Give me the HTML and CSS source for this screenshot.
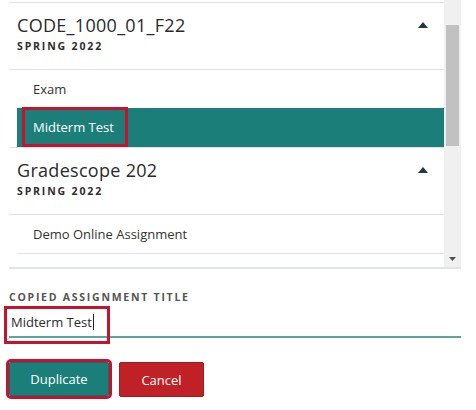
FILE: index.html
```html
<!DOCTYPE html>
<html>
<head>
<meta charset="utf-8">
<link rel="stylesheet" href="styles.css">
</head>
<body>
<div class="picker">
  <div class="list">
    <div class="course-head">
      <div class="course-text">
        <div class="course-title">CODE_1000_01_F22</div>
        <div class="course-term">SPRING 2022</div>
      </div>
      <svg class="caret" width="10" height="6" viewBox="0 0 10 6"><polygon points="5,0 10,6 0,6" fill="#1f3a3d"/></svg>
    </div>
    <div class="items">
      <div class="item">Exam</div>
      <div class="item selected"><span class="mark">Midterm Test</span></div>
    </div>
    <div class="course-head">
      <div class="course-text">
        <div class="course-title">Gradescope 202</div>
        <div class="course-term">SPRING 2022</div>
      </div>
      <svg class="caret" width="10" height="6" viewBox="0 0 10 6"><polygon points="5,0 10,6 0,6" fill="#1f3a3d"/></svg>
    </div>
    <div class="items">
      <div class="item">Demo Online Assignment</div>
    </div>
  </div>
  <div class="scrollbar">
    <div class="thumb"></div>
    <div class="down">
      <svg width="7" height="4" viewBox="0 0 7 4"><polygon points="0,0 7,0 3.5,4" fill="#505050"/></svg>
    </div>
  </div>
</div>

<div class="field">
  <div class="label">COPIED ASSIGNMENT TITLE</div>
  <div class="input-wrap">
    <div class="input">Midterm Test<span class="cursor"></span></div>
    <div class="input-mark"></div>
  </div>
</div>

<div class="actions">
  <button class="btn primary marked">Duplicate</button>
  <button class="btn danger">Cancel</button>
</div>
</body>
</html>
```

FILE: styles.css
```css
* { box-sizing: border-box; }
body {
  margin: 0;
  background: #fff;
  font-family: "Open Sans", Lato, sans-serif;
  color: #2b2b2b;
  width: 476px;
  height: 410px;
  overflow: hidden;
}
.picker {
  margin-left: 9px;
  width: 452px;
  height: 269px;
  display: flex;
  border-bottom: 2px solid #e1e4e9;
}
.list {
  width: 435px;
  padding-top: 2px;
  overflow: hidden;
}
.course-head {
  height: 68px;
  border-top: 1px solid #e2e0e8;
  border-bottom: 1px solid #e2e0e8;
  padding: 11px 16px 0 8px;
  display: flex;
  justify-content: space-between;
  align-items: flex-start;
}
.course-title {
  font-size: 18px;
  line-height: 22px;
  letter-spacing: 0.3px;
  color: #2a2a2a;
}
.course-term {
  margin-top: 4px;
  font-size: 10.5px;
  line-height: 13px;
  font-weight: 700;
  letter-spacing: 1.85px;
  color: #2e2e2e;
}
.caret { margin-top: 8px; }
.items { margin-left: 8px; }
.item {
  height: 39px;
  border-bottom: 1px solid #e4e4e8;
  padding-left: 16px;
  display: flex;
  align-items: center;
  font-size: 13px;
  color: #333;
}
.item.selected {
  margin-top: -1px;
  background: #1b7e78;
  border-bottom-color: #1b7e78;
  color: #fff;
  padding-left: 5px;
}
.mark {
  height: 40px;
  width: 106px;
  border: 3px solid #c4122f;
  padding-left: 8px;
  display: flex;
  align-items: center;
}
.scrollbar {
  width: 17px;
  background: #f0f0f0;
  display: flex;
  flex-direction: column;
  align-items: center;
}
.thumb {
  margin-top: 25px;
  width: 13px;
  height: 121px;
  background: #c1c1c1;
}
.down {
  margin-top: auto;
  height: 17px;
  width: 17px;
  display: flex;
  align-items: center;
  justify-content: center;
}
.down svg { display: block; }
.field { margin: 22px 0 0 9px; width: 452px; }
.label {
  font-size: 10.5px;
  line-height: 13px;
  font-weight: 700;
  letter-spacing: 1.75px;
  color: #555;
}
.input-wrap { position: relative; margin-top: 3px; }
.input {
  height: 31px;
  border-bottom: 2px solid #5ba4a0;
  padding-left: 2px;
  display: flex;
  align-items: center;
  font-size: 13px;
  color: #2b2b2b;
}
.cursor {
  display: inline-block;
  width: 1px;
  height: 16px;
  background: #222;
  margin-left: 1px;
}
.input-mark {
  position: absolute;
  left: -5px;
  top: -1px;
  width: 106px;
  height: 38px;
  border: 3px solid #c4122f;
}
.actions {
  margin: 24px 0 0 9px;
  display: flex;
  gap: 10px;
  align-items: flex-start;
}
.btn {
  font-family: "Open Sans", Lato, sans-serif;
  font-size: 13px;
  color: #fff;
  border-radius: 2px;
  height: 34px;
  padding: 0;
  cursor: pointer;
}
.primary {
  width: 100px;
  background: #1b7e78;
  border: 1px solid #156d68;
}
.marked { outline: 3px solid #c4122f; }
.danger {
  width: 85px;
  height: 35px;
  background: #c02126;
  border: 1px solid #9e1b1f;
}
```
